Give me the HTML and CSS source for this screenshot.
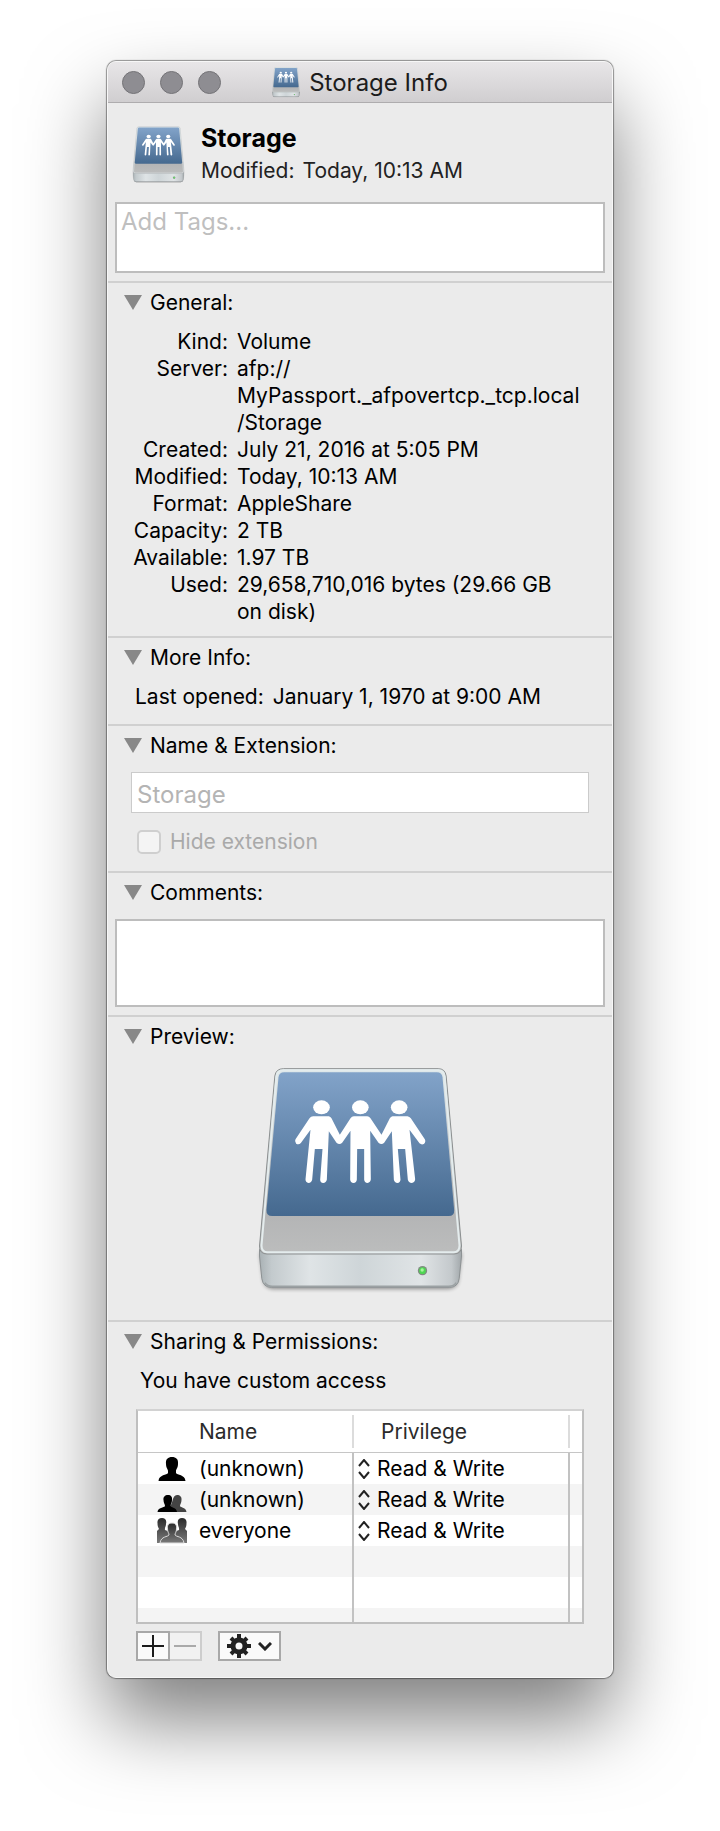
FILE: index.html
```
<!DOCTYPE html>
<html lang="en">
<head>
    <meta charset="UTF-8" />
    <meta name="viewport" content="width=device-width, initial-scale=1.0"/>
    <title>Storage Info</title>
    <link rel="stylesheet" href="styles.css">
</head>
<body>
    <!-- Shared drive icon, reused at three sizes -->
    <svg class="sprite" aria-hidden="true">
        <defs>
            <linearGradient id="screen" x1="0" y1="0" x2="0" y2="1">
                <stop offset="0" stop-color="#82a3c9"/>
                <stop offset="1" stop-color="#45698f"/>
            </linearGradient>
            <linearGradient id="top" x1="0" y1="0" x2="0" y2="1">
                <stop offset="0" stop-color="#dfe8ea"/>
                <stop offset="0.75" stop-color="#b2b3b4"/>
                <stop offset="1" stop-color="#bcbdbd"/>
            </linearGradient>
            <linearGradient id="front" x1="0" y1="0" x2="1" y2="0">
                <stop offset="0" stop-color="#a9b1b4"/>
                <stop offset="0.06" stop-color="#c3cacd"/>
                <stop offset="0.25" stop-color="#dfe4e6"/>
                <stop offset="0.5" stop-color="#ced5d8"/>
                <stop offset="0.8" stop-color="#e0e4e6"/>
                <stop offset="0.95" stop-color="#c4c9cc"/>
                <stop offset="1" stop-color="#a2a8ab"/>
            </linearGradient>
            <filter id="soft" x="-10%" y="-10%" width="120%" height="120%">
                <feGaussianBlur stdDeviation="6"/>
            </filter>
            <linearGradient id="crowd" x1="0" y1="0" x2="0" y2="1">
                <stop offset="0" stop-color="#2a2a2a"/>
                <stop offset="1" stop-color="#7a7a7a"/>
            </linearGradient>
        </defs>
        <symbol id="drive" viewBox="50 50 626 690">
            <path d="M62 610 L72 692 Q76 718 100 718 H626 Q652 718 656 692 L666 610 Z" fill="#000" opacity="0.45" filter="url(#soft)"/>
            <path d="M60 600 V620 L67 688 Q71 714 96 714 H630 Q655 714 659 688 L666 620 V600 Z" fill="url(#front)" stroke="#8d9294" stroke-width="3"/>
            <path d="M76 700 Q84 711 98 711 H628 Q644 711 650 700" fill="none" stroke="#9ba1a3" stroke-width="5"/>
            <path d="M132 58 H596 Q617 58 620 80 L666 590 Q666 614 644 614 H82 Q60 614 60 590 L106 80 Q109 58 132 58 Z" fill="url(#top)" stroke="#8b8f90" stroke-width="3"/>
            <path d="M132 63 H596 Q612 63 615 82 L660 588 Q660 609 642 609 H84 Q66 609 66 588 L111 82 Q114 63 132 63 Z" fill="none" stroke="#e4eced" stroke-width="6"/>
            <path d="M134 69 H592 Q607 69 609 84 L644 482 Q645 500 628 500 H98 Q80 500 81 482 L117 84 Q119 69 134 69 Z" fill="url(#screen)"/>
            <g fill="#fff">
                <ellipse cx="246" cy="174" rx="25" ry="21"/>
                <ellipse cx="362.500" cy="174" rx="25" ry="21"/>
                <ellipse cx="479" cy="174" rx="25" ry="21"/>
                <path d="M221 201 H268 Q273 202 276 207 L301 256 L333 207 Q337 201 343 201 H383 Q389 201 393 207 L426 256 L451 207 Q454 202 459 201 H504 Q510 202 514 207 L556 270 Q560 278 553 284 Q546 287 540 282 L510 241 L527 390 Q526 400 517 401 Q507 400 505 391 L497 299 H475 L483 391 Q482 400 474 401 Q465 400 463 391 L457 246 L434 280 Q426 288 417 280 L392 244 L394 390 Q393 400 384 401 Q375 400 374 391 V299 H353 L352 391 Q351 400 342 401 Q333 400 332 391 L333 244 L308 280 Q300 288 291 280 L268 246 L262 391 Q260 400 251 401 Q242 400 242 391 L249 299 H226 L218 391 Q216 400 207 401 Q198 400 198 390 L213 241 L184 281 Q178 287 170 283 Q164 277 168 270 L210 207 Q214 201 221 201 Z"/>
            </g>
            <circle cx="549" cy="664" r="14" fill="#7f8c80"/>
            <circle cx="549" cy="664" r="10" fill="#4fd653"/>
            <circle cx="548" cy="662" r="5" fill="#a5f59b"/>
        </symbol>
    </svg>

    <main class="window">
        <header class="titlebar">
            <div class="lights">
                <button class="light" type="button" aria-label="Close"></button>
                <button class="light" type="button" aria-label="Minimize"></button>
                <button class="light" type="button" aria-label="Zoom"></button>
            </div>
            <h1 class="title">
                <svg class="title-icon" aria-hidden="true"><use href="#drive"/></svg>
                Storage Info
            </h1>
        </header>

        <div class="summary">
            <svg class="summary-icon" aria-hidden="true"><use href="#drive"/></svg>
            <div>
                <h2 class="name">Storage</h2>
                <p class="modified"><span>Modified:</span> <span>Today, 10:13 AM</span></p>
            </div>
        </div>
        <div class="tags">
            <textarea class="box tags-box" placeholder="Add Tags..." aria-label="Tags"></textarea>
        </div>

        <details class="section" open>
            <summary>General:</summary>
            <dl class="info">
                <dt>Kind:</dt>
                <dd>Volume</dd>
                <dt>Server:</dt>
                <dd>afp://<br>MyPassport._afpovertcp._tcp.local<br>/Storage</dd>
                <dt>Created:</dt>
                <dd>July 21, 2016 at 5:05 PM</dd>
                <dt>Modified:</dt>
                <dd>Today, 10:13 AM</dd>
                <dt>Format:</dt>
                <dd>AppleShare</dd>
                <dt>Capacity:</dt>
                <dd>2 TB</dd>
                <dt>Available:</dt>
                <dd>1.97 TB</dd>
                <dt>Used:</dt>
                <dd>29,658,710,016 bytes (29.66 GB<br>on disk)</dd>
            </dl>
        </details>

        <details class="section" open>
            <summary>More Info:</summary>
            <dl class="info more">
                <dt>Last opened:</dt>
                <dd>January 1, 1970 at 9:00 AM</dd>
            </dl>
        </details>

        <details class="section" open>
            <summary>Name &amp; Extension:</summary>
            <div class="extension">
                <input class="filename" type="text" value="Storage" aria-label="Name" disabled>
                <label class="hide"><input type="checkbox" disabled> Hide extension</label>
            </div>
        </details>

        <details class="section" open>
            <summary>Comments:</summary>
            <div class="comments">
                <textarea class="box comments-box" aria-label="Comments"></textarea>
            </div>
        </details>

        <details class="section" open>
            <summary>Preview:</summary>
            <div class="preview">
                <svg class="preview-icon" role="img" aria-label="Shared drive"><use href="#drive"/></svg>
            </div>
        </details>

        <details class="section" open>
            <summary>Sharing &amp; Permissions:</summary>
            <div class="sharing">
                <p class="access">You have custom access</p>
                <table class="permissions">
                    <thead>
                        <tr>
                            <th class="col-name"><span>Name</span></th>
                            <th class="col-privilege"><span>Privilege</span></th>
                            <th class="col-end"></th>
                        </tr>
                    </thead>
                    <tbody>
                        <tr>
                            <td>
                                <div class="user">
                                    <svg class="user-icon" viewBox="0 0 32 26" aria-hidden="true">
                                        <path d="M16 1 C20 1 22.500 3 22 8 C22 12 20 13 20 15 V17 C21 19 29 18.500 29.500 25 H2.500 C3 18.500 11 19 12 17 V15 C12 13 10 12 10 8 C9.500 3 12 1 16 1 Z"/>
                                    </svg>
                                    (unknown)
                                </div>
                            </td>
                            <td>
                                <div class="privilege">
                                    <svg class="arrows" viewBox="0 0 12 20" aria-hidden="true"><path d="M1 7 L6 1 L11 7 M1 13 L6 19 L11 13"/></svg>
                                    <select aria-label="Privilege for first user"><option>Read &amp; Write</option></select>
                                </div>
                            </td>
                            <td></td>
                        </tr>
                        <tr>
                            <td>
                                <div class="user">
                                    <svg class="user-icon" viewBox="0 0 32 26" aria-hidden="true">
                                        <path fill="#444" d="M21 8 C24 8 26 10 25.500 13 C25.500 16 24 17 24 19 C25 21 30 20 30.500 25 H14 V19 C17 17 16 8 21 8 Z"/>
                                        <path d="M12 8 C15 8 16.500 10 16 13 C16 16 14.500 17 14.500 19 C15.500 21 20.500 20 21 25 H1.500 C2 20 8 21 9 19 C9 17 7.500 16 7.500 13 C7 10 9 8 12 8 Z"/>
                                    </svg>
                                    (unknown)
                                </div>
                            </td>
                            <td>
                                <div class="privilege">
                                    <svg class="arrows" viewBox="0 0 12 20" aria-hidden="true"><path d="M1 7 L6 1 L11 7 M1 13 L6 19 L11 13"/></svg>
                                    <select aria-label="Privilege for group"><option>Read &amp; Write</option></select>
                                </div>
                            </td>
                            <td></td>
                        </tr>
                        <tr>
                            <td>
                                <div class="user">
                                    <svg class="user-icon" viewBox="0 0 32 26" aria-hidden="true">
                                        <path fill="url(#crowd)" d="M6 0 C9 0 11 2 10 6 C10 9 8.500 9 9 12 L14 14 V25 H1 V13 L3 11 C2 9 1.500 8 1.500 5 C1 2 3 0 6 0 Z"/>
                                        <path fill="url(#crowd)" d="M26 0 C29 0 31 2 30.500 5 C30.500 8 30 9 29 11 L31 13 V25 H18 V14 L23 12 C23.500 9 22 9 22 6 C21 2 23 0 26 0 Z"/>
                                        <path fill="url(#crowd)" stroke="#ddd" stroke-width="1" d="M16 5 C20 5 21 8 20.500 11 C20.500 14 19 15 19 17 C20 19 27 18 28 25 H4 C5 18 12 19 13 17 C13 15 11.500 14 11.500 11 C11 8 12 5 16 5 Z"/>
                                    </svg>
                                    everyone
                                </div>
                            </td>
                            <td>
                                <div class="privilege">
                                    <svg class="arrows" viewBox="0 0 12 20" aria-hidden="true"><path d="M1 7 L6 1 L11 7 M1 13 L6 19 L11 13"/></svg>
                                    <select aria-label="Privilege for everyone"><option>Read &amp; Write</option></select>
                                </div>
                            </td>
                            <td></td>
                        </tr>
                        <tr><td></td><td></td><td></td></tr>
                        <tr><td></td><td></td><td></td></tr>
                        <tr class="cut"><td></td><td></td><td></td></tr>
                    </tbody>
                </table>
                <div class="actions">
                    <button class="action" type="button" aria-label="Add">
                        <svg width="22" height="22" viewBox="0 0 22 22"><path d="M11 0 V22 M0 11 H22" stroke="#1b1b1b" stroke-width="2"/></svg>
                    </button>
                    <button class="action remove" type="button" aria-label="Remove" disabled>
                        <svg width="22" height="22" viewBox="0 0 22 22"><path d="M0 11 H22" stroke="#a9a9a9" stroke-width="2"/></svg>
                    </button>
                    <button class="action gear" type="button" aria-label="Actions">
                        <svg width="24" height="24" viewBox="-12 -12 24 24" fill="none" stroke="#222">
                            <circle r="6" stroke-width="5"/>
                            <path stroke-width="4" d="M0 -12 V-7 M0 7 V12 M-12 0 H-7 M7 0 H12 M-8 -8 L-5 -5 M5 5 L8 8 M8 -8 L5 -5 M-5 5 L-8 8"/>
                        </svg>
                        <svg width="14" height="9" viewBox="0 0 14 9" fill="none" stroke="#222" stroke-width="3"><path d="M1 1 L7 7 L13 1"/></svg>
                    </button>
                </div>
            </div>
        </details>
    </main>
</body>
</html>
```

FILE: styles.css
```
* {
    box-sizing: border-box;
}
body {
    font-family: Inter, "Liberation Sans", sans-serif;
    font-size: 21px;
    line-height: 27px;
    background-color: #fff;
    color: #000;
    margin: 0;
    padding: 61px 107px 153px;
}
h1, h2, p, dl, dd {
    margin: 0;
}
button, input, select, textarea {
    font: inherit;
    margin: 0;
}
.sprite {
    position: absolute;
    width: 0;
    height: 0;
}
.window {
    background-color: #ebebeb;
    border: 1px solid #f7f7f7;
    border-radius: 9px;
    overflow: hidden;
    box-shadow: 0 0 1px 1px rgba(0, 0, 0, 0.4), 0 42px 80px rgba(0, 0, 0, 0.5);
}

/* Title bar */
.titlebar {
    display: grid;
    grid-template-columns: 1fr auto 1fr;
    align-items: center;
    height: 41px;
    padding: 0 14px;
    background: linear-gradient(#e8e6e8, #d0ced0);
    border-bottom: 1px solid #aeacae;
}
.lights {
    display: flex;
    gap: 15px;
}
.light {
    width: 23px;
    height: 23px;
    padding: 0;
    border: 1px solid #747377;
    border-radius: 50%;
    background-color: #8e8d92;
}
.title {
    display: flex;
    align-items: center;
    gap: 9px;
    font-size: 24px;
    font-weight: 400;
    color: #1c1c1c;
}
.title-icon {
    width: 28px;
    height: 31px;
}

/* Name and tags */
.summary {
    display: flex;
    align-items: center;
    gap: 16px;
    padding: 19px 24px 14px;
}
.summary-icon {
    width: 53px;
    height: 58px;
}
.name {
    font-size: 25px;
    font-weight: 700;
    line-height: 32px;
}
.modified {
    display: flex;
    gap: 8px;
    line-height: 34px;
    color: #222;
}
.tags, .comments {
    padding: 0 7px 8px;
}
.box {
    display: block;
    width: 100%;
    border: 2px solid #bdbdbd;
    background-color: #fff;
    resize: none;
    outline: none;
}
.tags-box {
    height: 71px;
    padding: 4px;
    font-size: 24px;
}
.tags-box::placeholder {
    color: #bfbfbf;
}

/* Sections */
.section {
    border-top: 2px solid #d0d0d0;
}
summary {
    display: flex;
    align-items: center;
    gap: 8px;
    height: 38px;
    padding-left: 16px;
}
summary::before {
    content: "";
    border: solid transparent;
    border-width: 15px 9px 0;
    border-top-color: #888;
}
.info {
    display: grid;
    grid-template-columns: 96px 1fr;
    column-gap: 9px;
    padding: 7px 24px 11px;
}
.info dt {
    text-align: right;
}
.more {
    grid-template-columns: auto 1fr;
    padding-left: 27px;
    padding-bottom: 14px;
}
.extension {
    padding: 8px 23px 16px;
}
.filename {
    display: block;
    width: 100%;
    height: 41px;
    padding: 4px 5px 0;
    font-size: 24px;
    color: #b4b4b4;
    background-color: #fff;
    border: 1px solid #cbcbcb;
}
.hide {
    display: flex;
    align-items: center;
    gap: 9px;
    padding: 15px 6px 0;
    color: #a9a9a9;
}
.hide input {
    appearance: none;
    width: 24px;
    height: 24px;
    border: 2px solid #cfcfcf;
    border-radius: 5px;
    background-color: #f4f4f4;
}
.comments {
    padding-top: 8px;
}
.comments-box {
    height: 88px;
}
.preview {
    display: flex;
    justify-content: center;
    padding: 11px 0 24px;
}
.preview-icon {
    width: 209px;
    height: 230px;
}

/* Sharing */
.sharing {
    padding: 7px 28px 16px;
}
.access {
    padding: 0 4px 15px;
}
.permissions {
    width: 100%;
    table-layout: fixed;
    border-collapse: separate;
    border-spacing: 0;
    background-color: #fff;
    border: 2px solid #bfbfbf;
    border-top-color: #d2d2d2;
}
.permissions th {
    height: 42px;
    padding: 4px 0;
    font-weight: 400;
    text-align: left;
    color: #2b2b2b;
    border-bottom: 1px solid #c6c6c6;
}
.permissions th span {
    display: block;
    line-height: 33px;
    border-right: 2px solid #dcdcdc;
}
.permissions .col-name {
    width: 216px;
}
.col-name span {
    padding-left: 61px;
}
.col-privilege span {
    padding-left: 27px;
}
.permissions .col-end {
    width: 12px;
}
.permissions td {
    height: 31px;
    padding: 0;
    border-right: 2px solid #c2c2c2;
}
.permissions td:last-child {
    border-right: 0;
}
.permissions tbody tr:nth-child(even) {
    background-color: #f4f4f4;
}
.permissions .cut td {
    height: 14px;
}
.user {
    display: flex;
    align-items: center;
    gap: 11px;
    padding-left: 18px;
}
.user-icon {
    width: 32px;
    height: 26px;
}
.privilege {
    display: flex;
    align-items: center;
    gap: 7px;
    padding-left: 4px;
}
.arrows {
    width: 12px;
    height: 20px;
    fill: none;
    stroke: #222;
    stroke-width: 2;
}
.privilege select {
    appearance: none;
    padding: 0;
    border: 0;
    background: none;
    color: #000;
}
.actions {
    display: flex;
    padding-top: 7px;
}
.action {
    display: flex;
    align-items: center;
    justify-content: center;
    gap: 7px;
    width: 34px;
    height: 30px;
    padding: 0;
    border: 2px solid #a8a8a8;
    background-color: #fafafa;
}
.remove {
    width: 32px;
    border-color: #cdcdcd;
    border-left: 0;
    background-color: #f1f1f1;
}
.gear {
    width: 63px;
    margin-left: 16px;
}
```
